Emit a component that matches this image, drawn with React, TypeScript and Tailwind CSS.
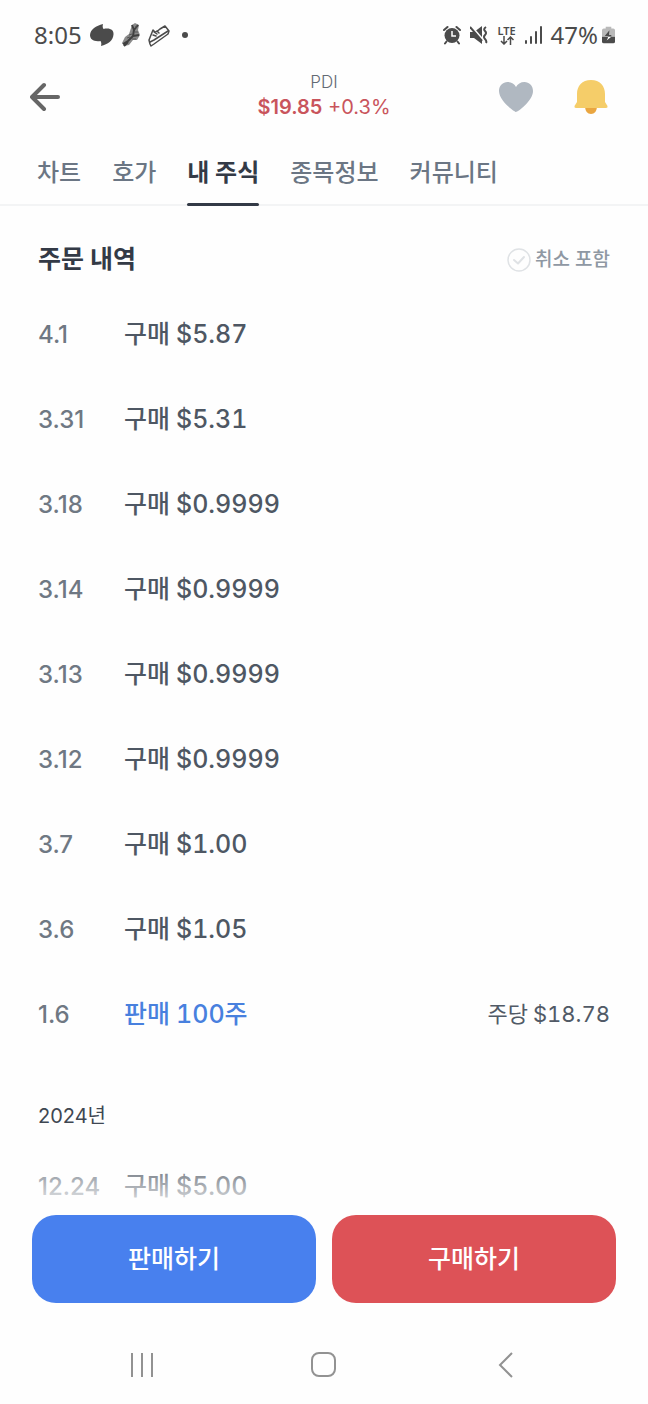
import { useState } from "react"

type Order = {
  date: string
  kind: string
  amount: string
  sell?: boolean
  perShare?: string
}

const tabs = ["차트", "호가", "내 주식", "종목정보", "커뮤니티"]

const orders: Order[] = [
  { date: "4.1", kind: "구매", amount: "$5.87" },
  { date: "3.31", kind: "구매", amount: "$5.31" },
  { date: "3.18", kind: "구매", amount: "$0.9999" },
  { date: "3.14", kind: "구매", amount: "$0.9999" },
  { date: "3.13", kind: "구매", amount: "$0.9999" },
  { date: "3.12", kind: "구매", amount: "$0.9999" },
  { date: "3.7", kind: "구매", amount: "$1.00" },
  { date: "3.6", kind: "구매", amount: "$1.05" },
  { date: "1.6", kind: "판매", amount: "100주", sell: true, perShare: "$18.78" },
]

const lastYearOrders: Order[] = [{ date: "12.24", kind: "구매", amount: "$5.00" }]

function StatusBar() {
  return (
    <div className="flex h-[70px] shrink-0 items-center justify-between pl-[34px] pr-[33px] font-['Noto_Sans',sans-serif] text-2xl text-[#4b4b4b]">
      <div className="flex items-center gap-2">
        <span>8:05</span>
        <svg className="h-[22px] w-6" viewBox="0 0 24 22" fill="currentColor">
          <path d="M13 0C12.500 2 12.500 3.500 13.500 5C20 3.500 24 6 23.500 10.500C23 17 18 20 11 22C11.500 20 11.500 18.500 10.500 17C4 18 0 15.500 0 11C0.500 5 6 2 13 0Z" />
        </svg>
        <svg className="h-6 w-[18px]" viewBox="0 0 18 24" fill="none">
          <path d="M10 2L13 0L17 2L16 7L18 12L15 17L11 17L7 22L2 23L0 20L3 14L7 11Z" fill="#8a8a8a" />
          <path d="M10 2L12 7L11 13L6 18L1 21M12 7L16 2M11 13L17 12M6 19L2 23" stroke="#3f3f3f" strokeWidth="2" />
          <path d="M7 12L10 11M5 15L8 14M13 4L15 4M13 9L16 9M10 16L14 16" stroke="#555" strokeWidth="1" />
        </svg>
        <svg className="h-6 w-[22px]" viewBox="0 0 22 24" fill="none" stroke="currentColor" strokeWidth="1.500" strokeLinejoin="round" strokeLinecap="round">
          <path d="M2 21L1 17L5 7L7 9C9 9 11 7 12 6L17 3L21 8L20 11L6 21L3 23Z" />
          <path d="M2 19L6 17L20 8M5 12L8 13M6 9L9 11M9 8L11 10" />
        </svg>
        <span className="ml-1 h-[6px] w-[6px] rounded-full bg-current" />
      </div>
      <div className="flex items-center gap-[9px]">
        <svg className="h-5 w-[18px]" viewBox="0 0 18 20">
          <circle cx="9" cy="10.500" r="7.500" fill="currentColor" />
          <path d="M1 5L4.500 2M17 5L13.500 2M3.500 16.500L2 18.500M14.500 16.500L16 18.500" stroke="currentColor" strokeWidth="2" strokeLinecap="round" />
          <path d="M9 6V11H13" fill="none" stroke="#fff" strokeWidth="1.500" />
        </svg>
        <svg className="h-5 w-[18px]" viewBox="0 0 18 20" fill="none" stroke="currentColor">
          <path d="M0 7H4L12 1V19L4 13H0Z" fill="currentColor" stroke="none" />
          <path d="M1 1L14 16" stroke="#fefefe" strokeWidth="2" />
          <path d="M0 2L12 16" strokeWidth="2" />
          <path d="M16 2Q13 4 15 6T15 10T15 14T16 18" strokeWidth="2" />
        </svg>
        <div className="flex flex-col items-center text-[11px] font-semibold leading-[11px]">
          LTE
          <svg className="h-[9px] w-[14px]" viewBox="0 0 14 9" fill="none" stroke="currentColor" strokeWidth="1.500">
            <path d="M4 0V8M1 5L4 8L7 5M10.500 9V1M7.500 4L10.500 1L13.500 4" />
          </svg>
        </div>
        <svg className="h-5 w-[17px]" viewBox="0 0 17 20" stroke="currentColor" strokeWidth="2" strokeLinecap="round">
          <path d="M1 16V18M6 12V18M11 7V18M16 2V18" />
        </svg>
        <div className="flex items-center gap-1">
          <span>47%</span>
          <svg className="h-5 w-[13px]" viewBox="0 0 14 20">
            <path d="M4 1H10V3H12Q14 3 14 5V12H0V5Q0 3 2 3H4Z" fill="#b9b9b9" />
            <path d="M0 12H14V17Q14 19 12 19H2Q0 19 0 17Z" fill="currentColor" />
            <path d="M8 5L3 11H6.500L6 12H10V10H7.500Z" fill="currentColor" />
            <path d="M6 12H10L5 16L6.500 13Z" fill="#fff" />
          </svg>
        </div>
      </div>
    </div>
  )
}

function StockHeader() {
  return (
    <header className="grid h-[54px] shrink-0 grid-cols-[1fr_auto_1fr] items-center px-[30px]">
      <button type="button" aria-label="뒤로" className="justify-self-start">
        <svg className="h-8 w-[30px]" viewBox="0 0 30 32" fill="none" stroke="#666" strokeWidth="4" strokeLinecap="round" strokeLinejoin="round">
          <path d="M14 4L2 16L14 28M2 16H28" />
        </svg>
      </button>
      <div className="pb-1 text-center">
        <h1 className="text-[17px] font-light leading-6 text-[#626a74]">PDI</h1>
        <p className="text-xl leading-[26px] text-[#c9545c]">
          <span className="font-semibold">$19.85</span> +0.3%
        </p>
      </div>
      <div className="flex items-center gap-10 justify-self-end pr-[10px]">
        <button type="button" aria-label="관심 종목">
          <svg className="h-9 w-9" viewBox="0 0 36 36" fill="#b0b8c1">
            <path d="M18 33C16.500 33 1 22 1 12C1 6.500 5 3 9.500 3C13.500 3 16.500 5 18 8C19.500 5 22.500 3 26.500 3C31 3 35 6.500 35 12C35 22 19.500 33 18 33Z" />
          </svg>
        </button>
        <button type="button" aria-label="알림">
          <svg className="h-9 w-[34px]" viewBox="0 0 34 36">
            <path d="M11 27H23C23 32 20.500 35 17 35C13.500 35 11 32 11 27Z" fill="#eaa640" />
            <path d="M17 1C8 1 3 7 3 15V23L0.500 27Q0 29 2 29H32Q34 29 33.500 27L31 23V15C31 7 26 1 17 1Z" fill="#f5cd69" />
          </svg>
        </button>
      </div>
    </header>
  )
}

function OrderRow({ order }: { order: Order }) {
  return (
    <li className="flex h-[85px] items-center">
      <span className="w-[86px] shrink-0 text-2xl font-medium text-[#6f7883]">{order.date}</span>
      <span
        className={
          order.sell
            ? "flex gap-[6px] text-[25px] font-medium tabular-nums text-[#4880de]"
            : "flex gap-[6px] text-[25px] font-medium tabular-nums text-[#4e5763]"
        }
      >
        <span>{order.kind}</span>
        <span>{order.amount}</span>
      </span>
      {order.perShare && (
        <span className="ml-auto flex gap-[5px] text-[22px] tabular-nums text-[#515a66]">
          <span>주당</span>
          <span>{order.perShare}</span>
        </span>
      )}
    </li>
  )
}

export default function App() {
  const [activeTab, setActiveTab] = useState("내 주식")
  const [includeCanceled, setIncludeCanceled] = useState(false)

  return (
    <div className="flex h-screen flex-col bg-[#fefefe] font-[Inter,'Noto_Sans_CJK_KR',sans-serif]">
      <StatusBar />
      <StockHeader />

      {/* Tabs */}
      <nav className="flex h-[82px] shrink-0 gap-[31px] border-b-2 border-[#f3f4f5] pl-[37px] pt-4">
        {tabs.map((tab) => (
          <button
            key={tab}
            type="button"
            onClick={() => setActiveTab(tab)}
            className={
              tab === activeTab
                ? "relative -mb-[2px] text-2xl font-bold text-[#333a46]"
                : "relative -mb-[2px] text-2xl font-medium text-[#6b7684]"
            }
          >
            {tab}
            {tab === activeTab && <span className="absolute inset-x-0 bottom-0 h-[3px] rounded-full bg-[#333a46]" />}
          </button>
        ))}
      </nav>

      {/* Order history */}
      <main className="min-h-0 flex-1 overflow-y-auto px-[38px] [scrollbar-width:none]">
        <div className="flex h-[86px] items-center justify-between pt-[22px]">
          <h2 className="text-[25px] font-bold text-[#333a46]">주문 내역</h2>
          <label className="flex cursor-pointer items-center gap-1 text-[19px] font-medium text-[#8f98a3]">
            <input
              type="checkbox"
              className="sr-only"
              checked={includeCanceled}
              onChange={(e) => setIncludeCanceled(e.target.checked)}
            />
            <svg
              className={includeCanceled ? "h-6 w-6 text-[#4880ee]" : "h-6 w-6 text-[#dfe2e5]"}
              viewBox="0 0 24 24"
              fill="none"
              stroke="currentColor"
              strokeWidth="2"
              strokeLinecap="round"
              strokeLinejoin="round"
            >
              <circle cx="12" cy="12" r="11" strokeWidth="1.500" />
              <path d="M7 12L11 15.500L17 9" />
            </svg>
            취소 포함
          </label>
        </div>
        <ul>
          {orders.map((order) => (
            <OrderRow key={order.date} order={order} />
          ))}
        </ul>
        <h3 className="pt-[45px] text-[20px] leading-7 text-[#3f4752]">2024년</h3>
        <ul className="pt-[14px]">
          {lastYearOrders.map((order) => (
            <OrderRow key={order.date} order={order} />
          ))}
        </ul>
      </main>

      {/* Trade buttons, with the list fading out behind them */}
      <footer className="relative shrink-0">
        <div className="pointer-events-none absolute inset-x-0 bottom-full h-[60px] bg-linear-to-b from-[#fefefe]/0 to-[#fefefe]" />
        <div className="grid grid-cols-2 gap-4 px-8 text-[25px] font-medium text-white">
          <button type="button" className="h-[88px] rounded-3xl bg-[#4880ee] pt-[2px]">
            판매하기
          </button>
          <button type="button" className="h-[88px] rounded-3xl bg-[#dd5257] pt-[2px]">
            구매하기
          </button>
        </div>
        <div className="grid h-[101px] grid-cols-3 items-center justify-items-center px-[51px] pt-[22px]">
          <button type="button" aria-label="최근 앱">
            <svg className="h-7 w-7" viewBox="0 0 28 28" stroke="#929292" strokeWidth="2">
              <path d="M4 2V26M14 2V26M24 2V26" />
            </svg>
          </button>
          <button type="button" aria-label="홈">
            <svg className="h-7 w-7" viewBox="0 0 28 28" fill="none" stroke="#929292" strokeWidth="2">
              <rect x="2" y="2" width="23" height="23" rx="7" />
            </svg>
          </button>
          <button type="button" aria-label="뒤로 가기">
            <svg className="h-7 w-7" viewBox="0 0 28 28" fill="none" stroke="#929292" strokeWidth="2">
              <path d="M20 2L8 14L20 26" />
            </svg>
          </button>
        </div>
      </footer>
    </div>
  )
}
